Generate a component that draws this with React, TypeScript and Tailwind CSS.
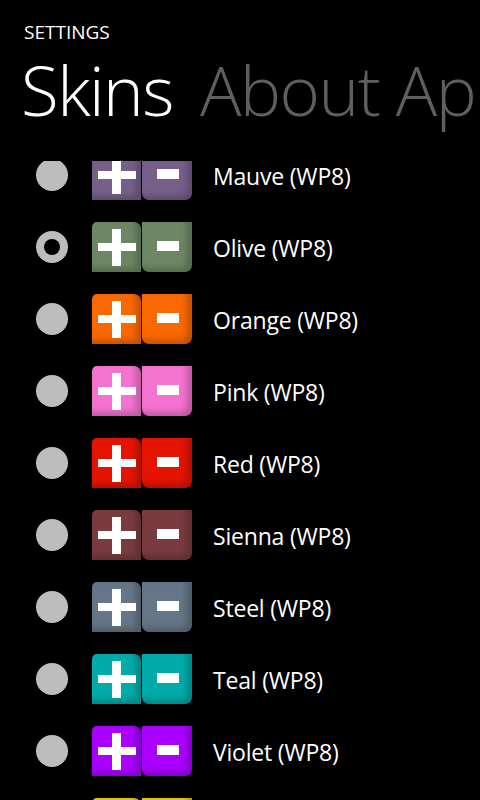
import React from "react";

const skins = [
  { name: "Mauve", color: "#76608a" },
  { name: "Olive", color: "#6d8764" },
  { name: "Orange", color: "#fa6800" },
  { name: "Pink", color: "#f472d0" },
  { name: "Red", color: "#e51400" },
  { name: "Sienna", color: "#7a3b3f" },
  { name: "Steel", color: "#647687" },
  { name: "Teal", color: "#00aba9" },
  { name: "Violet", color: "#aa00ff" },
  { name: "Yellow", color: "#e3c800" },
];

function Row({ name, color, selected }: { name: string; color: string; selected: boolean }) {
  return (
    <div className="flex h-[72px] items-center">
      <div className="ml-[36px] flex h-[32px] w-[32px] items-center justify-center rounded-full bg-[#bdbdbd]">
        {selected && <div className="h-[16px] w-[16px] rounded-full bg-black" />}
      </div>
      <div className="ml-[24px] flex h-[50px]">
        <div
          className="relative flex h-[50px] w-[49px] items-center justify-center rounded-tl-[5px] rounded-tr-[7px] shadow-[inset_-5px_-4px_6px_rgba(0,0,0,0.22)]"
          style={{ backgroundColor: color }}
        >
          <div className="absolute left-[6px] top-[21px] h-[8px] w-[38px] bg-white" />
          <div className="absolute left-[20px] top-[7px] h-[37px] w-[9px] bg-white" />
        </div>
        <div
          className="relative ml-[1px] h-[50px] w-[50px] rounded-bl-[7px] rounded-br-[7px] shadow-[inset_-5px_-4px_6px_rgba(0,0,0,0.22)]"
          style={{ backgroundColor: color }}
        >
          <div className="absolute left-[15px] top-[19px] h-[10px] w-[22px] bg-white" />
        </div>
      </div>
      <div className="ml-[21px] mt-[2px] font-['Open_Sans',sans-serif] text-[23px] leading-none tracking-[-0.2px] text-white">
        {name} (WP8)
      </div>
    </div>
  );
}

export default function App() {
  return (
    <div className="relative h-[800px] w-[480px] overflow-hidden bg-black font-['Open_Sans',sans-serif]">
      <div className="pl-[24px] pt-[22px] text-[19px] leading-[20px] text-white">SETTINGS</div>
      <div className="flex whitespace-nowrap pl-[21px] pt-[12px] text-[69px] font-light leading-[70px] tracking-[-1.5px]">
        <span className="text-white">Skins</span>
        <span className="ml-[27px] text-[#5f5f5f]">About Apps</span>
      </div>
      <div className="mt-[37px] h-[639px] overflow-hidden">
        <div className="-mt-[22px]">
          {skins.map((s) => (
            <Row key={s.name} name={s.name} color={s.color} selected={s.name === "Olive"} />
          ))}
        </div>
      </div>
    </div>
  );
}
